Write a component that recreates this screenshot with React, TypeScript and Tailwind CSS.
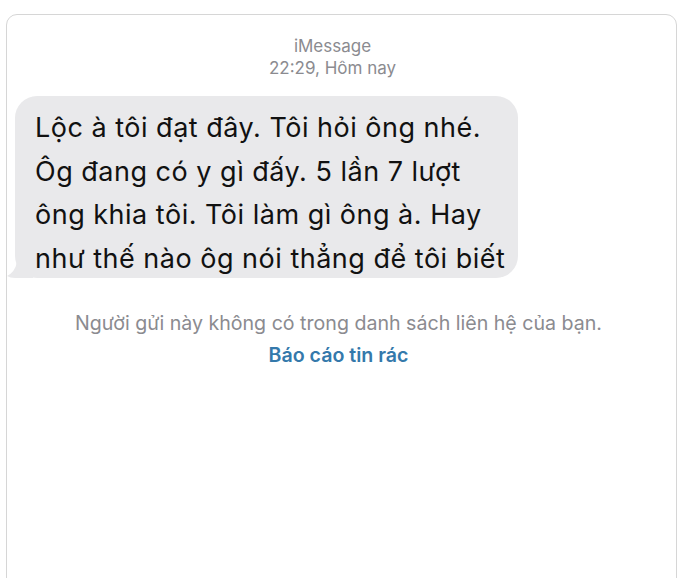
export default function App() {
    const font = { fontFamily: 'Inter, "Liberation Sans", Arial, sans-serif' };

    return (
        <div className="w-[690px] h-[578px] overflow-hidden bg-white pt-[14px] pl-[6px] pr-[13px]" style={font}>
            <div className="h-[620px] border border-[#d6d6d6] rounded-[11px] bg-white">
                {/* header */}
                <div className="pt-[20px] flex flex-col items-center text-[#8b8b90] text-[17px] leading-[22px] pr-[18px]">
                    <span>iMessage</span>
                    <span>22:29, Hôm nay</span>
                </div>

                {/* received bubble */}
                <div className="relative ml-[8px] mt-[17px] w-[503px] h-[182px] rounded-[22px] bg-[#e9e9eb] pl-[20px] pt-[10px] text-[#111111] text-[27px] tracking-[0.5px] leading-[43.5px]">
                    <p>Lộc à tôi đạt đây. Tôi hỏi ông nhé.</p>
                    <p>Ôg đang có y gì đấy. 5 lần 7 lượt</p>
                    <p>ông khia tôi. Tôi làm gì ông à. Hay</p>
                    <p>như thế nào ôg nói thẳng để tôi biết</p>
                    <svg className="absolute left-[-8px] bottom-0" width="26" height="22" viewBox="0 0 26 22">
                        <path d="M26 0 L26 22 L8 22 Q3 22 0 20 Q8 16 10 6 L10 0 Z" fill="#e9e9eb" />
                    </svg>
                </div>

                {/* footer */}
                <div className="mt-[33px] flex flex-col items-center pr-[6px]">
                    <span className="text-[19.6px] leading-[24px] text-[#8b8b90]">
                        Người gửi này không có trong danh sách liên hệ của bạn.
                    </span>
                    <span className="mt-[8px] text-[19.6px] leading-[24px] font-semibold text-[#3479ab]">
                        Báo cáo tin rác
                    </span>
                </div>
            </div>
        </div>
    );
}
